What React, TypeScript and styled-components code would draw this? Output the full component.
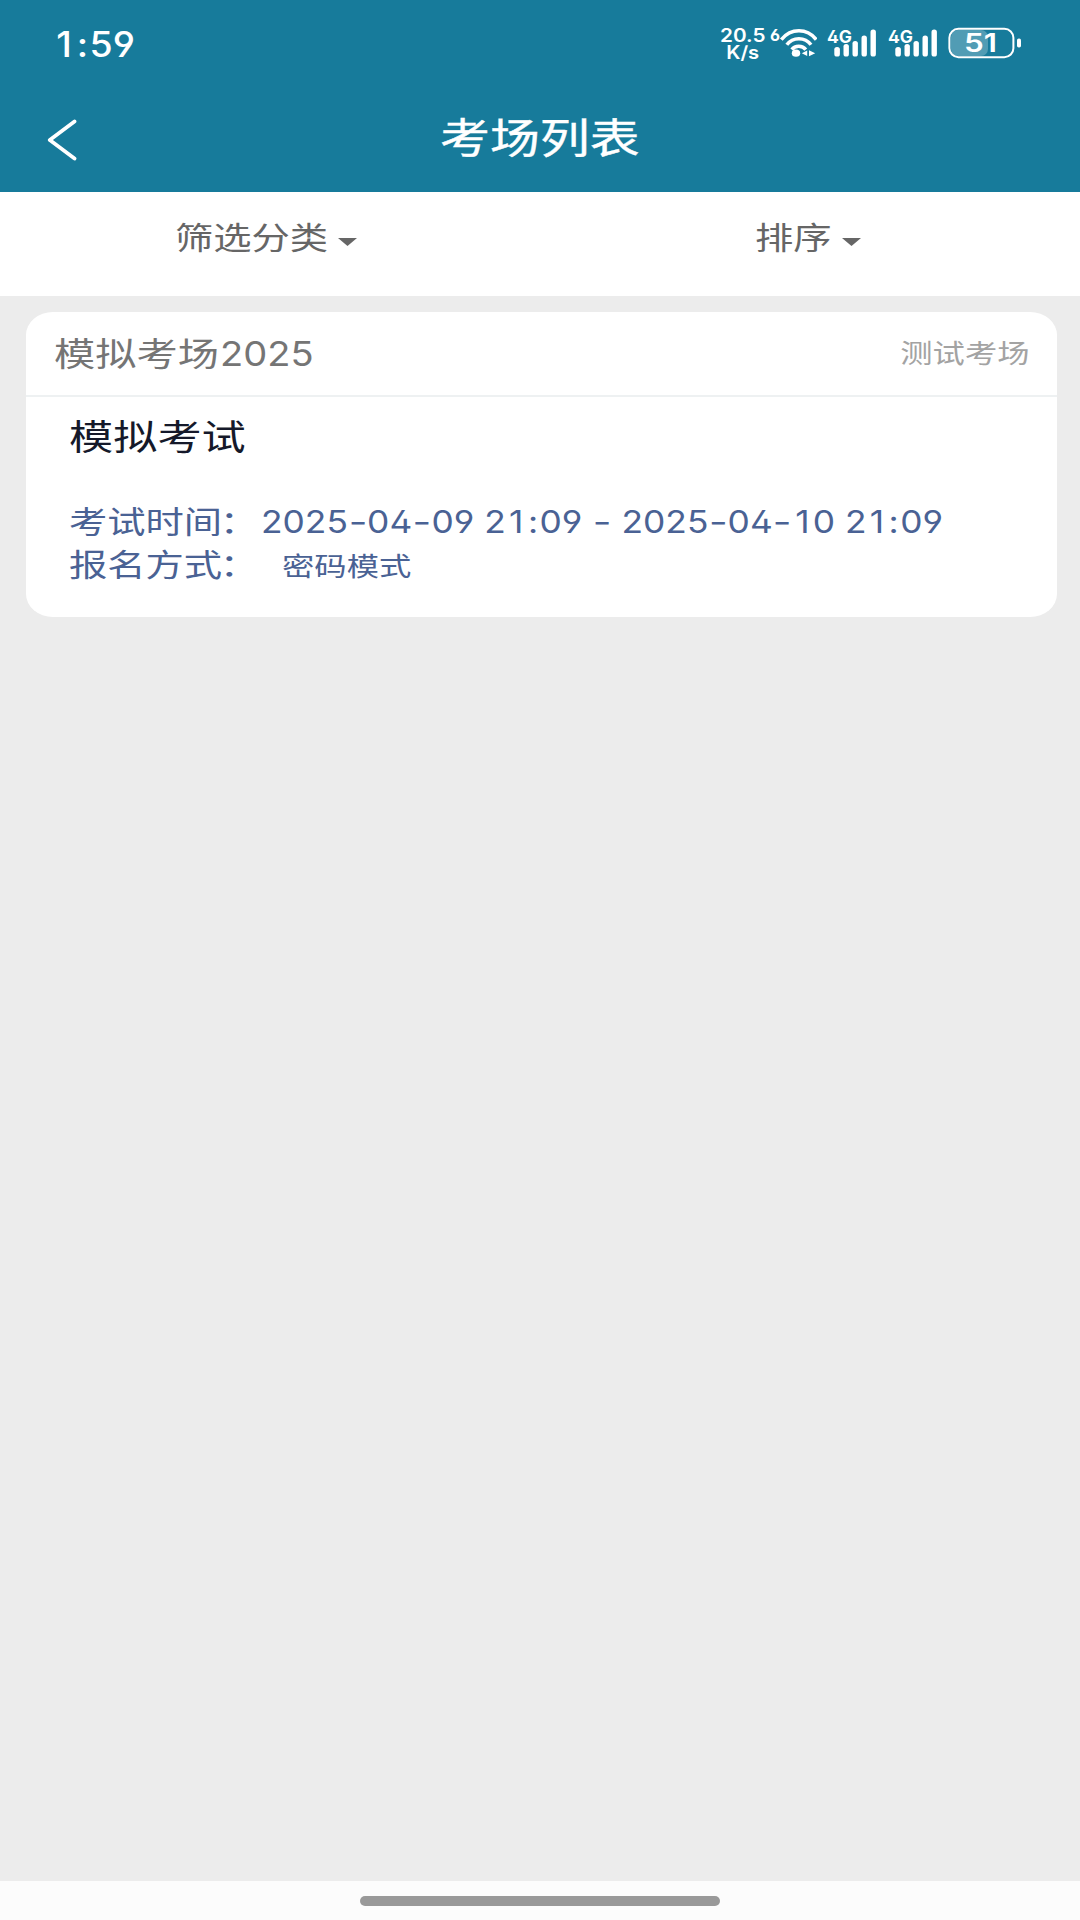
import React from "react";
import styled, { createGlobalStyle } from "styled-components";

const GlobalStyle = createGlobalStyle`
  *, *::before, *::after { box-sizing: border-box; }
  body {
    margin: 0;
    background: #ececec;
    font-family: Inter, "Noto Sans CJK SC", sans-serif;
    font-feature-settings: "ss01" 1;
  }
`;

type Origin = "left" | "center" | "right";

/* Wide-set text: glyphs are stretched horizontally around their anchor edge. */
const Wide = styled.span<{
  $size: number;
  $stretch?: number;
  $origin?: Origin;
  $weight?: number;
}>`
  display: inline-block;
  font-size: ${(p) => p.$size}px;
  font-weight: ${(p) => p.$weight ?? 400};
  line-height: 1.2;
  white-space: pre;
  transform: scaleX(${(p) => p.$stretch ?? 1.235});
  transform-origin: ${(p) => p.$origin ?? "left"} center;
`;

const Airy = styled.span<{ $space: number }>`
  margin: 0 ${(p) => p.$space}em;
`;

const Hyphen = styled.span`
  display: inline-block;
  margin: 0 0.042em;
  transform: scaleX(1.15);
`;

/* Date and clock text with even spacing around the narrow characters. */
const Numerals = ({ text }: { text: string }) => (
  <>
    {text.split(/([1:-])/).map((part, i) => {
      if (part === "1") return <Airy key={i} $space={0.09}>1</Airy>;
      if (part === ":") return <Airy key={i} $space={0.04}>:</Airy>;
      if (part === "-") return <Hyphen key={i}>-</Hyphen>;
      return part;
    })}
  </>
);

const Screen = styled.div`
  display: flex;
  flex-direction: column;
  width: 1080px;
  height: 1920px;
  overflow: hidden;
  background: #ececec;
`;

const Header = styled.header`
  height: 192px;
  flex: none;
  background: #177b9b;
  color: #fff;
`;

const StatusBar = styled.div`
  display: flex;
  align-items: center;
  justify-content: space-between;
  height: 88px;
  padding: 0 58px 0 53px;
`;

const StatusIcons = styled.div`
  display: flex;
  align-items: center;
  height: 40px;
`;

const Speed = styled.div`
  display: flex;
  flex-direction: column;
  align-items: center;
  width: 44px;
  margin-right: 5px;

  ${Wide} {
    line-height: 17px;
  }
`;

const Glyphs = styled.svg<{ $gap?: number }>`
  display: block;
  flex: none;
  margin-right: ${(p) => p.$gap ?? 0}px;
  font-family: Inter, sans-serif;
`;

const NavBar = styled.div`
  display: grid;
  grid-template-columns: 120px 1fr 120px;
  align-items: center;
  height: 102px;
`;

const BackButton = styled.button`
  display: flex;
  align-items: center;
  height: 60px;
  padding: 2px 0 0 46px;
  border: 0;
  background: none;
  color: inherit;
`;

const Title = styled.h1`
  margin: 0;
  text-align: center;
  font-size: 40px;
  line-height: 48px;
  -webkit-text-stroke: 0.4px currentColor;
`;

const Filters = styled.nav`
  display: grid;
  grid-template-columns: 534px 1fr;
  flex: none;
  height: 104px;
  background: #fff;
  color: #666;
`;

const Filter = styled.div<{ $labelWidth: number; $indent: number }>`
  display: grid;
  grid-template-columns: ${(p) => p.$labelWidth}px 19px;
  column-gap: 9px;
  align-content: start;
  padding: 27px 0 0 ${(p) => p.$indent}px;
`;

const Caret = styled.i`
  width: 19px;
  height: 8px;
  margin-top: 19px;
  background: currentColor;
  clip-path: polygon(0 0, 100% 0, 50% 100%);
`;

const List = styled.main`
  flex: 1;
  padding: 16px 23px 0 26px;
`;

const Card = styled.article`
  height: 305px;
  border-radius: 27px / 23px;
  background: #fff;
`;

const CardHead = styled.div`
  display: flex;
  align-items: center;
  justify-content: space-between;
  height: 85px;
  padding: 1px 27px 0 28px;
  border-bottom: 2px solid #eef1f2;
  color: #757575;
`;

const RoomName = styled.div`
  display: grid;
  grid-template-columns: 166px auto;
`;

const Tag = styled.span`
  color: #a3a3a3;
`;

const CardBody = styled.div`
  padding: 20px 43px 0;
  color: #4a6294;
`;

const Subject = styled.div`
  height: 83px;
  color: #15192a;
`;

const Row = styled.div`
  display: grid;
  grid-template-columns: 192px 1fr;
  align-items: center;
  height: 43px;
`;

const Colon = styled.span`
  margin-left: -2px;
`;

const Value = styled.div<{ $indent?: number; $drop?: number }>`
  padding: ${(p) => p.$drop ?? 0}px 0 0 ${(p) => p.$indent ?? 0}px;
`;

const HomeBar = styled.footer`
  display: flex;
  justify-content: center;
  flex: none;
  height: 39px;
  padding-top: 15px;
  background: #fcfcfc;
`;

const HomePill = styled.div`
  width: 360px;
  height: 10px;
  border-radius: 5px;
  background: #999;
`;

const Signal = ({ gap }: { gap: number }) => (
  <Glyphs $gap={gap} width="50" height="40" viewBox="0 0 50 40" fill="#fff">
    <text x="0" y="18.5" fontSize="17.5" fontWeight="700" textLength="25" lengthAdjust="spacingAndGlyphs">
      4G
    </text>
    <rect x="7.3" y="23" width="5.6" height="9.5" rx="2.6" />
    <rect x="16.5" y="20" width="5.4" height="12.5" rx="2.6" />
    <rect x="25.5" y="17" width="5.4" height="15.5" rx="2.6" />
    <rect x="34.5" y="11.5" width="5.4" height="21" rx="2.6" />
    <rect x="43.5" y="5.5" width="5.4" height="27" rx="2.6" />
  </Glyphs>
);

const Wifi = () => (
  <Glyphs $gap={10} width="47" height="40" viewBox="0 0 47 40" fill="none">
    <text x="0" y="17" fontSize="16.5" fontWeight="700" fill="#fff" textLength="10" lengthAdjust="spacingAndGlyphs">
      6
    </text>
    <g stroke="#fff" strokeWidth="3.5">
      <path d="M11.3 15.6C21 3.9 37 3.9 46.2 15.6" />
      <path d="M16.8 20.8C22.8 12.6 35 12.6 41 20.8" />
      <path d="M21.8 25.6C25 21.2 32.4 21.2 35.8 25.6" />
    </g>
    <ellipse cx="26" cy="29.2" rx="4.2" ry="3.6" fill="#fff" />
    <path d="M37.2 26.4v5.6l-5.4-2.8zM39 26.2v6l6.2-3z" fill="#fff" />
  </Glyphs>
);

const Battery = () => (
  <Glyphs width="74" height="40" viewBox="0 0 74 40">
    <rect x="3" y="6" width="37" height="26" rx="7" fill="#fff" fillOpacity="0.25" />
    <rect x="1.4" y="4.8" width="64" height="28.4" rx="9" fill="none" stroke="#fff" strokeWidth="2" />
    <rect x="69" y="14.5" width="4" height="9" rx="1.8" fill="#fff" />
    <text x="16" y="28.4" fontSize="25" fontWeight="600" fill="#fff" textLength="33" lengthAdjust="spacingAndGlyphs">51</text>
  </Glyphs>
);

export default function App() {
  return (
    <Screen>
      <GlobalStyle />
      <Header>
        <StatusBar>
          <Wide $size={35} $weight={500} $stretch={1.07}>
            <Numerals text="1:59" />
          </Wide>
          <StatusIcons>
            <Speed>
              <Wide $size={18} $weight={600} $stretch={1.15} $origin="center">20.5</Wide>
              <Wide $size={18} $weight={600} $stretch={1.12} $origin="center">K/s</Wide>
            </Speed>
            <Wifi />
            <Signal gap={11} />
            <Signal gap={10} />
            <Battery />
          </StatusIcons>
        </StatusBar>
        <NavBar>
          <BackButton aria-label="返回">
            <svg width="32" height="42" viewBox="0 0 32 42" fill="none" stroke="#fff" strokeWidth="3.8" strokeLinecap="round" strokeLinejoin="round">
              <path d="M28.5 2.5L3.8 21L28.5 39.5" />
            </svg>
          </BackButton>
          <Title>
            <Wide $size={40.4} $origin="center">考场列表</Wide>
          </Title>
        </NavBar>
      </Header>
      <Filters>
        <Filter $labelWidth={154} $indent={175}>
          <Wide $size={31}>筛选分类</Wide>
          <Caret />
        </Filter>
        <Filter $labelWidth={78} $indent={221}>
          <Wide $size={31}>排序</Wide>
          <Caret />
        </Filter>
      </Filters>
      <List>
        <Card>
          <CardHead>
            <RoomName>
              <Wide $size={33.4}>模拟考场</Wide>
              <Wide $size={33.4} $stretch={1.14}>2025</Wide>
            </RoomName>
            <Tag>
              <Wide $size={26.4} $stretch={1.225} $origin="right">测试考场</Wide>
            </Tag>
          </CardHead>
          <CardBody>
            <Subject>
              <Wide $size={35.5} $stretch={1.245}>模拟考试</Wide>
            </Subject>
            <Row>
              <Wide $size={31}>考试时间<Colon>：</Colon></Wide>
              <Value>
                <Wide $size={31} $stretch={1.14}>
                  <Numerals text="2025-04-09 21:09 - 2025-04-10 21:09" />
                </Wide>
              </Value>
            </Row>
            <Row>
              <Wide $size={31}>报名方式<Colon>：</Colon></Wide>
              <Value $indent={21} $drop={4}>
                <Wide $size={26.4} $stretch={1.225}>密码模式</Wide>
              </Value>
            </Row>
          </CardBody>
        </Card>
      </List>
      <HomeBar>
        <HomePill />
      </HomeBar>
    </Screen>
  );
}
